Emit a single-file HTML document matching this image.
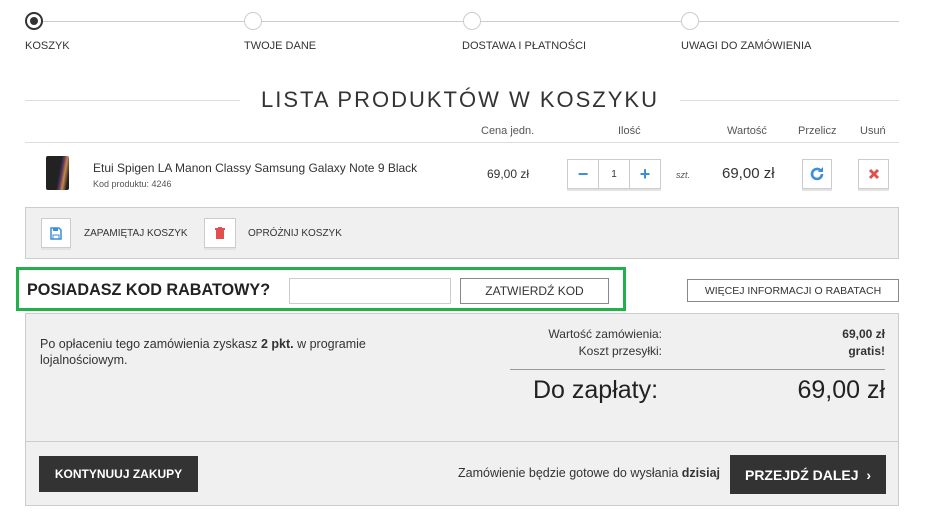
<!DOCTYPE html>
<html><head><meta charset="utf-8"><style>
*{margin:0;padding:0;box-sizing:border-box}
body{width:927px;height:515px;background:#fff;font-family:"Liberation Sans",sans-serif;color:#333;position:relative;overflow:hidden}
.a{position:absolute}
.lbl{font-size:11px;color:#333;top:40px}
.hdr{font-size:11px;color:#555;top:125px}
.box{background:#fff;border:1px solid #ccc;box-shadow:0 2px 0 #e3e3e3}
.c{display:flex;align-items:center;justify-content:center}
</style></head><body>
<div class="a" style="left:34px;top:21px;width:865px;height:1px;background:#ccc"></div>
<div class="a" style="left:25px;top:12px;width:18px;height:18px;border:2px solid #333;border-radius:50%;background:#fff"></div>
<div class="a" style="left:30px;top:17px;width:8px;height:8px;border-radius:50%;background:#333"></div>
<div class="a" style="left:244px;top:12px;width:18px;height:18px;border:1px solid #ccc;border-radius:50%;background:#fff"></div>
<div class="a" style="left:463px;top:12px;width:18px;height:18px;border:1px solid #ccc;border-radius:50%;background:#fff"></div>
<div class="a" style="left:681px;top:12px;width:18px;height:18px;border:1px solid #ccc;border-radius:50%;background:#fff"></div>
<div class="a lbl" style="left:25px">KOSZYK</div>
<div class="a lbl" style="left:244px">TWOJE DANE</div>
<div class="a lbl" style="left:462px">DOSTAWA I PŁATNOŚCI</div>
<div class="a lbl" style="left:681px">UWAGI DO ZAMÓWIENIA</div>
<div class="a" style="left:25px;top:100px;width:215px;height:1px;background:#ddd"></div>
<div class="a" style="left:680px;top:100px;width:219px;height:1px;background:#ddd"></div>
<div class="a" style="left:240px;top:87px;width:440px;text-align:center;font-size:22px;letter-spacing:2px;color:#333">LISTA PRODUKTÓW W KOSZYKU</div>
<div class="a hdr" style="left:481px">Cena jedn.</div>
<div class="a hdr" style="left:618px">Ilość</div>
<div class="a hdr" style="left:727px">Wartość</div>
<div class="a hdr" style="left:798px">Przelicz</div>
<div class="a hdr" style="left:860px">Usuń</div>
<div class="a" style="left:25px;top:142px;width:874px;height:1px;background:#ddd"></div>
<div class="a" style="left:46px;top:156px;width:23px;height:34px;background:linear-gradient(100deg,#222 55%,#5a3a6a 65%,#c84 75%,#222 90%);border-radius:2px"></div>
<div class="a" style="left:93px;top:161px;font-size:12px;color:#333">Etui Spigen LA Manon Classy Samsung Galaxy Note 9 Black</div>
<div class="a" style="left:93px;top:179px;font-size:9px;color:#555">Kod produktu: 4246</div>
<div class="a" style="left:487px;top:167px;font-size:12px">69,00 zł</div>
<div class="a box c" style="left:567px;top:159px;width:32px;height:30px;color:#3a8fd8;font-weight:bold;font-size:18px">−</div>
<div class="a box c" style="left:598px;top:159px;width:32px;height:30px;font-size:10px">1</div>
<div class="a box c" style="left:629px;top:159px;width:32px;height:30px;color:#3a8fd8;font-weight:bold;font-size:18px">+</div>
<div class="a" style="left:676px;top:170px;font-size:9px;font-style:italic;color:#555">szt.</div>
<div class="a" style="left:722px;top:165px;font-size:15px">69,00 zł</div>
<div class="a box c" style="left:802px;top:159px;width:30px;height:30px">
<svg width="16" height="16" viewBox="0 0 16 16"><path d="M13 8a5 5 0 1 1-1.5-3.6" fill="none" stroke="#3a8fd8" stroke-width="2.6"/><path d="M14 1v5h-5z" fill="#3a8fd8"/></svg></div>
<div class="a box c" style="left:858px;top:159px;width:31px;height:30px">
<svg width="12" height="12" viewBox="0 0 12 12"><path d="M2 2l8 8M10 2l-8 8" stroke="#e05050" stroke-width="3"/></svg></div>
<div class="a" style="left:25px;top:207px;width:874px;height:52px;background:#f0f0f0;border:1px solid #ccc"></div>
<div class="a box c" style="left:41px;top:218px;width:30px;height:30px">
<svg width="12" height="13" viewBox="0 0 12 13"><path d="M1 1h8l2 2v9H1z" fill="none" stroke="#3a8fd8" stroke-width="1.5"/><rect x="3" y="1" width="5" height="3" fill="#3a8fd8"/><rect x="3" y="8" width="6" height="4" fill="none" stroke="#3a8fd8"/></svg></div>
<div class="a" style="left:84px;top:228px;font-size:10px">ZAPAMIĘTAJ KOSZYK</div>
<div class="a box c" style="left:204px;top:218px;width:32px;height:30px">
<svg width="10" height="12" viewBox="0 0 10 12"><rect x="0" y="1" width="10" height="2" fill="#e05050"/><rect x="1" y="3" width="8" height="9" fill="#e05050"/><rect x="3" y="0" width="4" height="1" fill="#e05050"/></svg></div>
<div class="a" style="left:248px;top:228px;font-size:10px">OPRÓŻNIJ KOSZYK</div>
<div class="a" style="left:16px;top:267px;width:610px;height:44px;border:3px solid #22b04b"></div>
<div class="a" style="left:27px;top:281px;font-size:16.2px;font-weight:bold;color:#222">POSIADASZ KOD RABATOWY?</div>
<div class="a" style="left:289px;top:278px;width:162px;height:26px;border:1px solid #ccc;background:#fff"></div>
<div class="a c" style="left:460px;top:278px;width:149px;height:26px;border:1px solid #888;font-size:12px;color:#333">ZATWIERDŹ KOD</div>
<div class="a c" style="left:687px;top:279px;width:212px;height:23px;border:1px solid #888;font-size:10.5px;color:#333">WIĘCEJ INFORMACJI O RABATACH</div>
<div class="a" style="left:25px;top:313px;width:874px;height:193px;background:#f0f0f0;border:1px solid #ccc"></div>
<div class="a" style="left:25px;top:441px;width:874px;height:1px;background:#ccc"></div>
<div class="a" style="left:40px;top:336px;font-size:12.5px;line-height:16px;width:380px">Po opłaceniu tego zamówienia zyskasz <b>2 pkt.</b> w programie lojalnościowym.</div>
<div class="a" style="left:480px;top:326px;width:182px;text-align:right;font-size:12px;line-height:17px">Wartość zamówienia:<br>Koszt przesyłki:</div>
<div class="a" style="left:780px;top:326px;width:105px;text-align:right;font-size:12px;line-height:17px;font-weight:bold">69,00 zł<br>gratis!</div>
<div class="a" style="left:510px;top:369px;width:375px;height:1px;background:#999"></div>
<div class="a" style="left:533px;top:376px;font-size:25px;color:#222">Do zapłaty:</div>
<div class="a" style="left:700px;top:376px;width:185px;text-align:right;font-size:25px;color:#222">69,00 zł</div>
<div class="a c" style="left:39px;top:456px;width:159px;height:36px;background:#333;color:#fff;font-size:12px;font-weight:bold">KONTYNUUJ ZAKUPY</div>
<div class="a" style="left:420px;top:466px;width:300px;text-align:right;font-size:12.5px">Zamówienie będzie gotowe do wysłania <b>dzisiaj</b></div>
<div class="a c" style="left:730px;top:455px;width:156px;height:39px;background:#333;color:#fff;font-size:14px;font-weight:bold">PRZEJDŹ DALEJ &nbsp;›</div>
</body></html>
